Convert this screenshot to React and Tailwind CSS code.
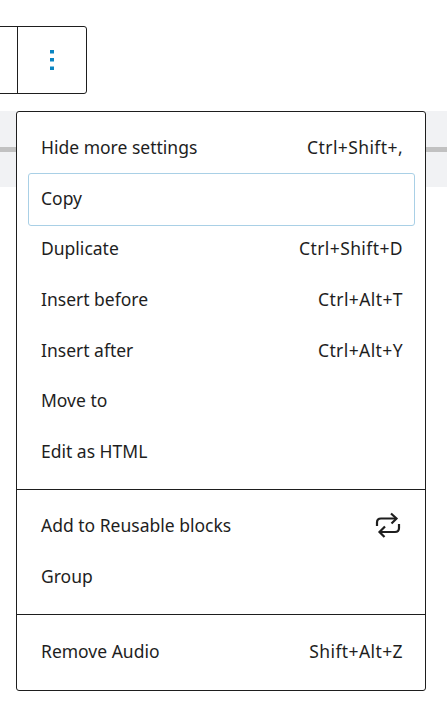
function Row({ label, hint, focus, icon }) {
  return (
    <div className="relative flex h-[50.67px] items-center justify-between pb-[2px] pl-[13px] pr-3">
      {focus ? <div className="absolute inset-x-0 top-0 bottom-[-2px] rounded-[3px] border border-[#a9d0e6]" /> : null}
      <span>{label}</span>
      {hint ? <span className="tracking-[0.4px]">{hint}</span> : null}
      {icon ? (
        <svg width="26" height="26" viewBox="0 0 26 26" fill="none" stroke="#1e1e1e" strokeWidth="2.2" className="mr-[2px]">
          <path d="M2 14 V10.5 C2 8 3.5 6.5 6 6.5 H21" />
          <path d="M16 1.5 L21.5 6.5 L16.5 11.5" />
          <path d="M24 12 V16 C24 18.5 22.5 20 20 20 H5" />
          <path d="M10 14.5 L4.5 20 L9.5 25" />
        </svg>
      ) : null}
    </div>
  );
}
export default function App() {
  return (
    <div className="relative h-[704px] w-[447px] overflow-hidden bg-white font-['Noto_Sans',sans-serif] text-[17.5px] text-[#1e1e1e]">
      <div className="pt-[26px]">
        <div className="ml-[-4px] flex h-[68px] w-[91px] rounded-[3px] border border-[#1e1e1e]">
          <div className="w-[21px] border-r border-[#1e1e1e]" />
          <div className="flex flex-1 items-center justify-center">
            <svg width="4" height="20" viewBox="0 0 4 20" fill="#0a85c2">
              <rect x="0" y="0" width="4" height="3.5" />
              <rect x="0" y="8" width="4" height="3.5" />
              <rect x="0" y="16.5" width="4" height="3.5" />
            </svg>
          </div>
        </div>
      </div>
      <div className="mt-[17px] flex h-[76px] items-center bg-[#f1f2f4]">
        <div className="h-[5px] w-full bg-[#c1c1c1]" />
      </div>
      <div className="absolute left-[16px] top-[111px] w-[410px] rounded-[3px] border border-[#1e1e1e] bg-white">
        <div className="pl-[11px] pr-[10px] pt-[10.7px] pb-[11.7px]">
          <Row label="Hide more settings" hint="Ctrl+Shift+," />
          <Row label="Copy" focus />
          <Row label="Duplicate" hint="Ctrl+Shift+D" />
          <Row label="Insert before" hint="Ctrl+Alt+T" />
          <Row label="Insert after" hint="Ctrl+Alt+Y" />
          <Row label="Move to" />
          <Row label="Edit as HTML" />
        </div>
        <div className="border-t border-[#1e1e1e] pl-[11px] pr-[10px] pt-[11px] pb-[12px]">
          <Row label="Add to Reusable blocks" icon />
          <Row label="Group" />
        </div>
        <div className="border-t border-[#1e1e1e] pl-[11px] pr-[10px] pt-[12px] pb-[12px]">
          <Row label="Remove Audio" hint="Shift+Alt+Z" />
        </div>
      </div>
    </div>
  );
}
